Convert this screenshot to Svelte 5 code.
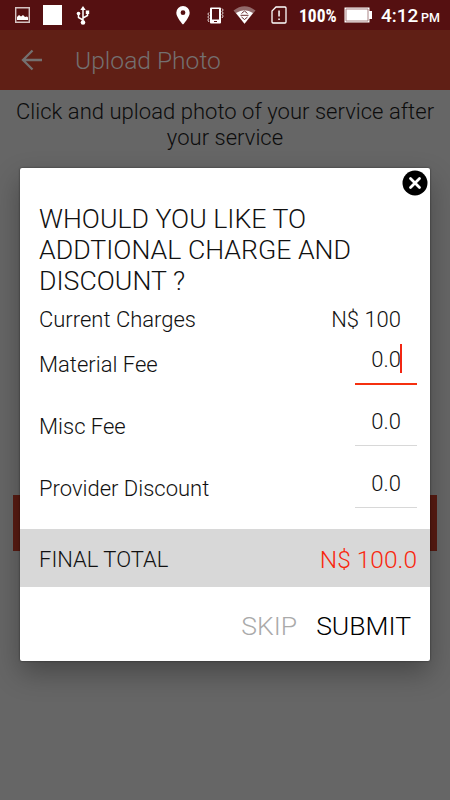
<script lang="ts">
    let current = 100;
    let fees = [
        { label: "Material Fee", value: "0.0", active: true },
        { label: "Misc Fee", value: "0.0", active: false },
        { label: "Provider Discount", value: "0.0", active: false },
    ];

    $: total = fees.slice(0, 2).reduce((sum, fee) => sum + Number(fee.value), current) - Number(fees[2].value);
</script>

<div class="screen">
    <div class="status">
        <svg class="picture" width="15" height="16" viewBox="0 0 15 16">
            <path d="M.7.7h13.6v14.6H.7z" fill="none" stroke="#d5c3c3" stroke-width="1.4" />
            <path d="M2 13v-3l2-2 2 1.5L8 8l2 2 2-.5 1 1V13z" fill="#fff" />
        </svg>
        <div class="square"></div>
        <svg class="usb" width="14" height="19" viewBox="0 0 14 19">
            <path d="M7 3v13M7 14 L2.5 11.500V8M7 12l4.500-2.500V6" fill="none" stroke="#fff" stroke-width="1.500" />
            <path d="M7 0l2.700 4H4.300zM9.800 4.500h3.400V8H9.800z" fill="#fff" />
            <circle cx="2.500" cy="7.500" r="1.800" fill="#fff" />
            <circle cx="7" cy="16.500" r="2.300" fill="#fff" />
        </svg>
        <svg class="pin" width="14" height="19" viewBox="0 0 14 19">
            <path fill-rule="evenodd" d="M7 0a6.700 6.700 0 0 0-6.700 6.700C.3 11.500 7 18.500 7 18.500s6.700-7 6.700-11.800A6.700 6.700 0 0 0 7 0zm0 4.300a2.400 2.400 0 1 1 0 4.800 2.400 2.400 0 0 1 0-4.800z" fill="#fff" />
        </svg>
        <svg class="vibrate" width="17" height="17" viewBox="0 0 17 17">
            <path fill-rule="evenodd" d="M4 .5h9a1 1 0 0 1 1 1v14a1 1 0 0 1-1 1H4a1 1 0 0 1-1-1v-14a1 1 0 0 1 1-1zM5 2v10.500h7V2zm2 12v1h3v-1z" fill="#fff" />
            <path d="M2 5.500L.8 7 2 8.500.8 10 2 11.500.8 13 2 15M15 1.500L16.200 3 15 4.500 16.200 6 15 7.500 16.200 9 15 11" fill="none" stroke="#e7dada" />
        </svg>
        <svg class="wifi" width="23" height="18" viewBox="0 0 23 18">
            <path d="M.5 4.500Q11.500-4 22.500 4.500L11.500 17.800z" fill="#92696a" />
            <path d="M3 7Q11.500 1.500 20 7L11.500 17.800z" fill="#fff" />
            <path d="M8.500 7.500l3-2.500 3 2.500M8.500 11l3 2.500 3-2.500M7.500 9.300h8" fill="none" stroke="#672e2f" />
        </svg>
        <svg class="sim" width="16" height="18" viewBox="0 0 16 18">
            <path d="M5 1h9a1 1 0 0 1 1 1v14a1 1 0 0 1-1 1H2a1 1 0 0 1-1-1V5z" fill="none" stroke="#fff" stroke-width="1.300" />
            <path d="M7.300 4.500h1.500v6H7.300zm0 8h1.500V14H7.300z" fill="#fff" />
        </svg>
        <span class="percent">100%</span>
        <svg class="battery" width="28" height="16" viewBox="0 0 28 16">
            <path d="M.5.500h25V4H28v8h-2.500v3.500H.5z" fill="#fff" />
            <path d="M2 2h22v12H2z" fill="none" stroke="#a98485" />
        </svg>
        <span class="clock">4:12</span><span class="pm">PM</span>
    </div>

    <div class="appbar">
        <svg class="back" width="22" height="22" viewBox="0 0 22 22">
            <path d="M21 11H2M11.500 1.500L2 11l9.500 9.500" fill="none" stroke="#747070" stroke-width="2.300" />
        </svg>
        <span>Upload Photo</span>
    </div>

    <p class="intro">Click and upload photo of your service after your service</p>
    <div class="upload"></div>

    <div class="overlay">
        <div class="dialog">
            <button class="close" aria-label="Close">
                <svg width="26" height="26" viewBox="0 0 26 26">
                    <circle cx="13" cy="13" r="12.500" fill="#000" />
                    <path d="M8.500 8.500l9 9M17.500 8.500l-9 9" stroke="#fff" stroke-width="2.800" stroke-linecap="round" />
                </svg>
            </button>

            <h2>WHOULD YOU LIKE TO<br />ADDTIONAL CHARGE AND<br />DISCOUNT ?</h2>

            <div class="current">
                <span>Current Charges</span>
                <span>N$ {current}</span>
            </div>

            {#each fees as fee}
                <div class="fee">
                    <span class="label">{fee.label}</span>
                    <div class="field" class:active={fee.active}>
                        <span>{fee.value}</span>
                        {#if fee.active}<i class="caret"></i>{/if}
                    </div>
                </div>
            {/each}

            <div class="total">
                <span>FINAL TOTAL</span>
                <span class="amount">N$ {total.toFixed(1)}</span>
            </div>

            <div class="actions">
                <button class="skip">SKIP</button>
                <button class="submit">SUBMIT</button>
            </div>
        </div>
    </div>
</div>

<style>
    :global(body) {
        margin: 0;
    }

    .screen {
        position: relative;
        width: 450px;
        height: 800px;
        overflow: hidden;
        background-color: #666;
        font-family: Roboto, sans-serif;
        font-weight: 300;
        color: #111;
    }

    .status {
        display: flex;
        align-items: center;
        box-sizing: border-box;
        height: 30px;
        padding-left: 15px;
        background-color: #551011;
        color: #fff;
    }

    .status svg {
        flex-shrink: 0;
    }

    .square {
        width: 19px;
        height: 20px;
        margin-left: 13px;
        background-color: #fff;
    }

    .usb {
        margin-left: 14px;
    }

    .pin {
        margin-left: 86px;
    }

    .vibrate {
        margin-left: 17px;
    }

    .wifi {
        margin-left: 9px;
    }

    .sim {
        margin-left: 15px;
    }

    .percent {
        width: 37px;
        margin: 1px 0 0 12px;
        font-size: 17.5px;
        font-stretch: 75%;
        font-weight: 700;
    }

    .battery {
        margin-left: 8px;
    }

    .clock {
        width: 37px;
        margin: 1px 0 0 9px;
        font-size: 19px;
        font-weight: 500;
    }

    .pm {
        margin: 5px 0 0 3px;
        font-size: 12.5px;
        font-weight: 500;
    }

    .appbar {
        display: flex;
        align-items: center;
        height: 60px;
        padding-left: 21px;
        background-color: #601f15;
        color: #747070;
        font-size: 24.6px;
    }

    .appbar span {
        margin: 1px 0 0 32px;
    }

    .intro {
        margin: 9px 10px 0;
        font-size: 22px;
        letter-spacing: 0.04px;
        line-height: 26px;
        text-align: center;
        color: #0c0c0c;
    }

    .upload {
        height: 56px;
        margin: 344px 13px 0;
        background-color: #591b12;
    }

    .overlay {
        position: absolute;
        inset: 0;
        padding: 168px 20px 0;
    }

    .dialog {
        display: flex;
        flex-direction: column;
        height: 493px;
        border-radius: 2px;
        background-color: #fff;
        box-shadow: 0 12px 28px rgba(0, 0, 0, 0.3), 0 0 2px rgba(0, 0, 0, 0.6);
    }

    button {
        padding: 0;
        border: 0;
        background: none;
        font: inherit;
    }

    .close {
        display: flex;
        align-self: flex-end;
        margin: 2px 2px 0 0;
    }

    h2 {
        margin: 8px 19px 0;
        font-size: 26.7px;
        font-weight: 300;
        line-height: 31px;
        white-space: nowrap;
    }

    .current {
        display: flex;
        justify-content: space-between;
        margin: 10px 29px 0 19px;
        font-size: 22px;
        line-height: 26px;
    }

    .fee {
        display: flex;
        justify-content: space-between;
        height: 62px;
        padding: 0 13px 0 19px;
        font-size: 22px;
    }

    .current + .fee {
        margin-top: 0.5px;
    }

    .label {
        margin-top: 18px;
        line-height: 26px;
    }

    .field {
        display: flex;
        justify-content: flex-end;
        box-sizing: border-box;
        width: 62px;
        height: 50px;
        padding: 13px 16px 0 0;
        border-bottom: 1px solid #d8d8d8;
        line-height: 26px;
    }

    .field.active {
        height: 51px;
        border-bottom: 2px solid #f5300f;
    }

    .caret {
        width: 2px;
        height: 29px;
        margin: -3px -1px 0 -1px;
        background-color: #f22613;
    }

    .total {
        display: flex;
        align-items: center;
        justify-content: space-between;
        height: 58px;
        margin-top: 9px;
        padding: 0 13px 0 19px;
        background-color: #d8d8d8;
        font-size: 22px;
    }

    .total span {
        margin-top: 3px;
    }

    .amount {
        color: #f8280f;
        font-size: 24.5px;
    }

    .actions {
        display: flex;
        justify-content: flex-end;
        gap: 19px;
        margin: 23px 19px 0;
        font-size: 26.5px;
        line-height: 32px;
    }

    .skip {
        color: #aaa;
    }

    .submit {
        color: #000;
    }
</style>
